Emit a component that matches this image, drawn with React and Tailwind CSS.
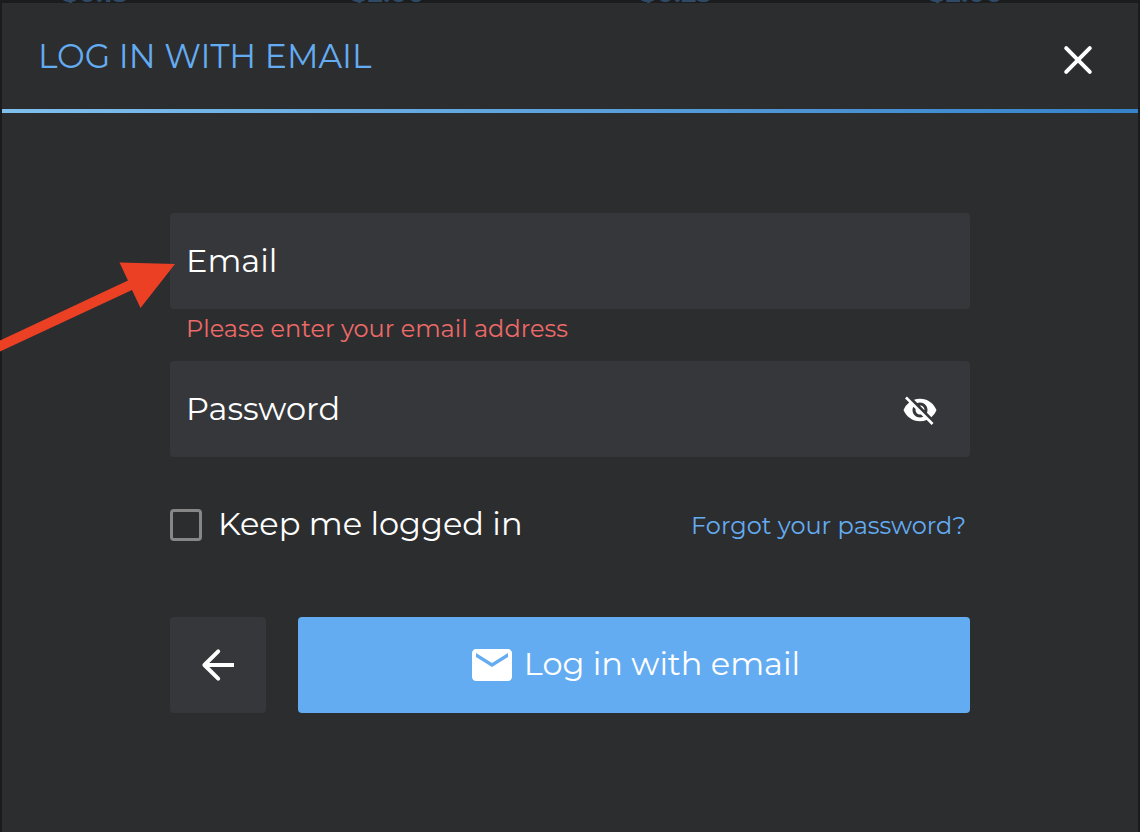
import React, { useState } from 'react';
import { MdMail, MdVisibilityOff } from 'react-icons/md';

const prices = ['$0.15', '$2.00', '$0.25', '$2.00'];

const CloseIcon = () => (
  <svg className="w-12 h-12" viewBox="0 0 48 48" fill="none" stroke="currentColor" strokeWidth={4} strokeLinecap="round" aria-hidden="true">
    <path d="M12.200 12.200L35.800 35.800M35.800 12.200L12.200 35.800" />
  </svg>
);

const BackIcon = () => (
  <svg className="w-12 h-12" viewBox="0 0 48 48" fill="none" stroke="currentColor" strokeWidth={4} aria-hidden="true">
    <path d="M24.200 10.400L10.400 24L24.200 37.600" strokeLinecap="round" strokeLinejoin="round" />
    <path d="M11 24H40" />
  </svg>
);

const Field = ({ id, label, type, value, onChange, children }) => (
  <div className="relative flex items-center h-24 rounded bg-[#36373a]">
    <input id={id} type={type} value={value} onChange={onChange} className="w-full h-full px-4 rounded bg-transparent outline-none text-[32px] text-white" />
    {!value && (
      <label htmlFor={id} className="absolute left-4 text-[32px] leading-10 text-white pointer-events-none">{label}</label>
    )}
    {children}
  </div>
);

const App = () => {
  const [email, setEmail] = useState('');
  const [password, setPassword] = useState('');
  const [showPassword, setShowPassword] = useState(false);
  const [keepLogged, setKeepLogged] = useState(false);

  const handleSubmit = (e) => {
    e.preventDefault();
  };

  return (
    <div className="min-h-screen flex flex-col bg-[#1b1c1d] font-['Montserrat','Inter',sans-serif] overflow-hidden">
      {/* page behind the dialog */}
      <div className="h-[3px] flex items-end pl-[62px] overflow-hidden">
        {prices.map((price, i) => (
          <span key={i} className="shrink-0 w-[289px] text-[26px] leading-5 font-bold text-[#304a65]">{price}</span>
        ))}
      </div>

      <div role="dialog" aria-labelledby="login-title" className="relative flex-1 flex flex-col mx-[2px] bg-[#2c2d2f]">
        <header className="flex items-center justify-between h-[106px] px-9">
          <h1 id="login-title" className="text-[33px] leading-10 text-[#64acf2]">LOG IN WITH EMAIL</h1>
          <button type="button" aria-label="Close" className="pt-2 text-white">
            <CloseIcon />
          </button>
        </header>
        <div className="h-1 bg-linear-to-r from-[#7fc0ee] to-[#3583cb]" />

        <form onSubmit={handleSubmit} noValidate className="w-full max-w-[800px] mx-auto pt-[100px]">
          <Field id="email" label="Email" type="email" value={email} onChange={(e) => setEmail(e.target.value)} />
          <p className="px-4 pb-3 text-[24px] leading-10 text-[#ec6a68]">Please enter your email address</p>

          <Field id="password" label="Password" type={showPassword ? 'text' : 'password'} value={password} onChange={(e) => setPassword(e.target.value)}>
            <button type="button" aria-label="Show password" onClick={() => setShowPassword(!showPassword)} className="mr-8 pt-0.5 text-white">
              <MdVisibilityOff className="w-9 h-9" />
            </button>
          </Field>

          <div className="flex items-center justify-between h-10 mt-12">
            <div className="flex items-center gap-4">
              <input id="keep" type="checkbox" checked={keepLogged} onChange={() => setKeepLogged(!keepLogged)} className="appearance-none w-8 h-8 rounded border-3 border-[#868686] checked:bg-[#64acf2]" />
              <label htmlFor="keep" className="pb-0.5 text-[32px] leading-10 text-white">Keep me logged in</label>
            </div>
            <a href="#forgot" className="pt-0.5 pr-1 text-[24px] leading-10 text-[#64acf2]">Forgot your password?</a>
          </div>

          <div className="flex gap-8 mt-[72px]">
            <button type="button" aria-label="Back" className="flex items-center justify-center w-24 h-24 rounded bg-[#36373a] text-white">
              <BackIcon />
            </button>
            <button type="submit" className="flex-1 flex items-center justify-center gap-2 h-24 rounded bg-[#64acf2] text-[32px] leading-10 text-white">
              <MdMail className="w-12 h-12" />
              <span className="pb-0.5">Log in with email</span>
            </button>
          </div>
        </form>

        {/* pointer to the email field */}
        <svg className="absolute left-[-2px] top-[257px] w-[176px] h-[96px] pointer-events-none" viewBox="0 0 176 96" fill="#ec4025" aria-hidden="true">
          <path d="M0 80.500L128 20.500L119.500 2.500L175 4L140.500 48L132 30L0 91.500Z" />
        </svg>
      </div>
    </div>
  );
};

export default App;
